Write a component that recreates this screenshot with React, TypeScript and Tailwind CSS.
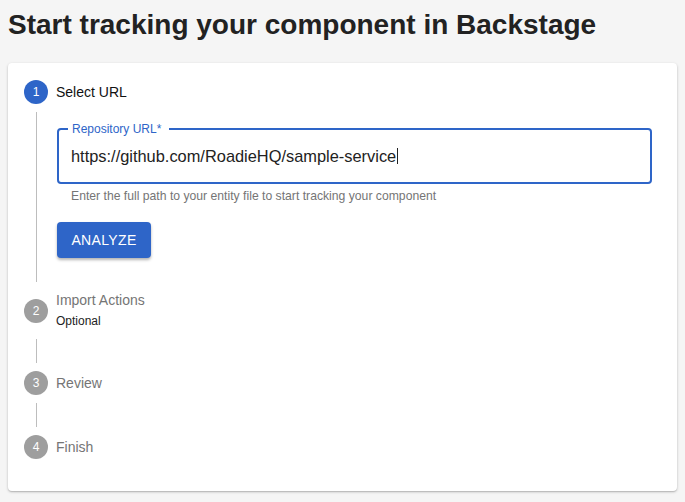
import React from "react";

const font = { fontFamily: '"Liberation Sans", Arial, Helvetica, sans-serif' };

const StepIcon = ({ n, active }: { n: number; active?: boolean }) => (
  <div
    className={`flex size-6 shrink-0 items-center justify-center rounded-full text-xs text-white ${
      active ? "bg-[#2e65c8]" : "bg-[#9e9e9e]"
    }`}
  >
    {n}
  </div>
);

export default function App() {
  return (
    <div className="min-h-screen bg-[#f5f5f5] px-2 pt-[9px]" style={font}>
      <h1 className="text-[28px] leading-8 font-bold text-[#222]">
        Start tracking your component in Backstage
      </h1>

      <div className="mt-[22px] h-[428px] rounded bg-white px-4 pt-[17px] shadow-[0_1px_3px_rgba(0,0,0,0.2),0_1px_1px_rgba(0,0,0,0.12)]">
        {/* Step 1 */}
        <div className="flex items-center gap-2">
          <StepIcon n={1} active />
          <span className="text-sm text-[#111]">Select URL</span>
        </div>
        <div className="mt-2 ml-3 border-l border-[#bdbdbd] pt-4 pb-6 pl-5">
          <div className="relative flex h-14 w-[595px] items-center rounded border-2 border-[#2e65c8] px-3">
            <span className="absolute -top-[7px] left-[9px] bg-white pr-2 pl-1 text-xs leading-none text-[#2e65c8]">
              Repository URL*
            </span>
            <span className="text-[16.4px] text-[#222]">
              https://github.com/RoadieHQ/sample-service
            </span>
            <span className="ml-px inline-block h-4 w-px bg-[#222]" />
          </div>
          <p className="mt-1 pl-[14px] text-[12.2px] leading-4 text-[#757575]">
            Enter the full path to your entity file to start tracking your component
          </p>
          <button className="mt-[18px] h-9 w-[94px] rounded bg-[#2e65c8] text-sm font-medium tracking-wide text-white shadow-[0_2px_3px_rgba(0,0,0,0.3)]">
            ANALYZE
          </button>
        </div>

        {/* Step 2 */}
        <div className="mt-2 flex items-start gap-2">
          <div className="mt-[9px]">
            <StepIcon n={2} />
          </div>
          <div className="flex flex-col">
            <span className="text-sm leading-5 text-[#757575]">Import Actions</span>
            <span className="mt-[3px] text-xs leading-4 text-[#222]">Optional</span>
          </div>
        </div>
        <div className="mt-[10px] ml-3 h-6 border-l border-[#bdbdbd]" />

        {/* Step 3 */}
        <div className="mt-2 flex items-center gap-2">
          <StepIcon n={3} />
          <span className="text-sm text-[#757575]">Review</span>
        </div>
        <div className="mt-2 ml-3 h-6 border-l border-[#bdbdbd]" />

        {/* Step 4 */}
        <div className="mt-2 flex items-center gap-2">
          <StepIcon n={4} />
          <span className="text-sm text-[#757575]">Finish</span>
        </div>
      </div>
    </div>
  );
}
